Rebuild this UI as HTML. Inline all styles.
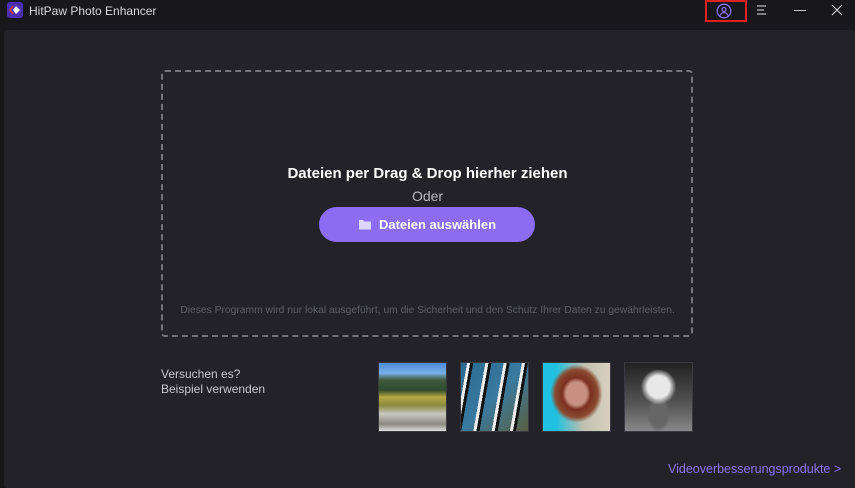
<!DOCTYPE html>
<html><head><meta charset="utf-8"><style>
*{margin:0;padding:0;box-sizing:border-box}
body{width:855px;height:488px;background:#18181c;font-family:"Liberation Sans","DejaVu Sans",sans-serif;position:relative;overflow:hidden}
.title{position:absolute;left:0;top:0;width:855px;height:24px;background:#18181c}
.logo{position:absolute;left:7px;top:2px;width:16px;height:16px;border-radius:3px;background:#4b2fb0}
.ttext{position:absolute;left:29px;top:4px;font-size:12px;color:#d8d8dc}
.main{position:absolute;left:4px;top:30px;width:851px;height:458px;background:#222228;border-radius:3px}
.drop{position:absolute;left:161px;top:70px;width:532px;height:267px;border:2px dashed #75757b;border-radius:4px}
.h1{position:absolute;left:0;width:855px;top:165px;text-align:center;color:#fff;font-weight:bold;font-size:15px}
.oder{position:absolute;left:0;width:855px;top:188px;text-align:center;color:#b8b8bd;font-size:14px}
.btn{position:absolute;left:319px;top:207px;width:216px;height:35px;border-radius:18px;background:#8b6cf2;color:#fff;font-weight:bold;font-size:13px;text-align:center;line-height:35px}
.note{position:absolute;left:0;width:855px;top:305px;text-align:center;color:#5f5f66;font-size:10.3px}
.try{position:absolute;left:161px;top:367px;color:#c8c8cc;font-size:12px;line-height:15px}
.th{position:absolute;top:362px;width:69px;height:70px;border:1px solid #3a3a40}
.link{position:absolute;left:668px;top:462px;color:#8d73f5;font-size:12.5px}
</style></head><body>
<div class="title"></div>
<div class="logo"><svg width="16" height="16"><path d="M6 4L3 8l3 4" stroke="#e0403a" stroke-width="1.5" fill="none"/><path d="M9 4l4 4-4 4-3-4z" fill="#fff"/></svg></div>
<div class="ttext">HitPaw Photo Enhancer</div>
<div style="position:absolute;left:705px;top:0;width:42px;height:22px;border:2px solid #e0201c"></div>
<svg style="position:absolute;left:716px;top:3px" width="16" height="16"><circle cx="8" cy="8" r="6.8" stroke="#8a73f0" stroke-width="1.3" fill="none"/><circle cx="8" cy="6.5" r="2" stroke="#8a73f0" stroke-width="1.2" fill="none"/><path d="M4 12.5c1-2 2.5-3 4-3s3 1 4 3" stroke="#8a73f0" stroke-width="1.2" fill="none"/></svg>
<svg style="position:absolute;left:756px;top:4px" width="12" height="12"><path d="M1 2h9M1 6h7M1 10h9" stroke="#bbb" stroke-width="1.2"/></svg>
<div style="position:absolute;left:794px;top:10px;width:12px;height:1px;background:#ccc"></div>
<svg style="position:absolute;left:831px;top:4px" width="12" height="12"><path d="M1 1l10 10M11 1L1 11" stroke="#ccc" stroke-width="1.2"/></svg>
<div class="main"></div>
<div class="drop"></div>
<div class="h1">Dateien per Drag &amp; Drop hierher ziehen</div>
<div class="oder">Oder</div>
<div class="btn"><svg width="15" height="12" style="vertical-align:-1px;margin-right:6px"><path d="M1 2h4l1.5 1.5H13v8H1z" fill="#ddd6ff"/></svg>Dateien auswählen</div>
<div class="note">Dieses Programm wird nur lokal ausgeführt, um die Sicherheit und den Schutz Ihrer Daten zu gewährleisten.</div>
<div class="try">Versuchen es?<br>Beispiel verwenden</div>
<div class="th" style="left:378px;background:linear-gradient(#4a8ad8 0%,#7ab0e8 15%,#3d5a3a 25%,#2f4a2c 40%,#b8a840 50%,#8a8a40 62%,#c8c8c0 75%,#8a8a80 90%,#e0e0e0)"></div>
<div class="th" style="left:460px;background:repeating-linear-gradient(100deg,transparent 0 6px,#eee 6px 9px,#111 9px 12px,transparent 12px 18px),linear-gradient(135deg,#2a6a90,#3a7aa0 50%,#5a6040)"></div>
<div class="th" style="left:542px;background:radial-gradient(ellipse at 50% 45%,#c89080 0 22%,#7a3020 30%,#8a4a30 45%,transparent 55%),linear-gradient(90deg,#20c0e0 0 20%,#c0c0b0 60%,#d8d0c0);"></div>
<div class="th" style="left:624px;background:radial-gradient(circle at 50% 35%,#e8e8e8 0 20%,transparent 32%),radial-gradient(ellipse at 50% 75%,#666 0 18%,transparent 25%),linear-gradient(#222,#555 60%,#888)"></div>
<div class="link">Videoverbesserungsprodukte &gt;</div>
</body></html>
